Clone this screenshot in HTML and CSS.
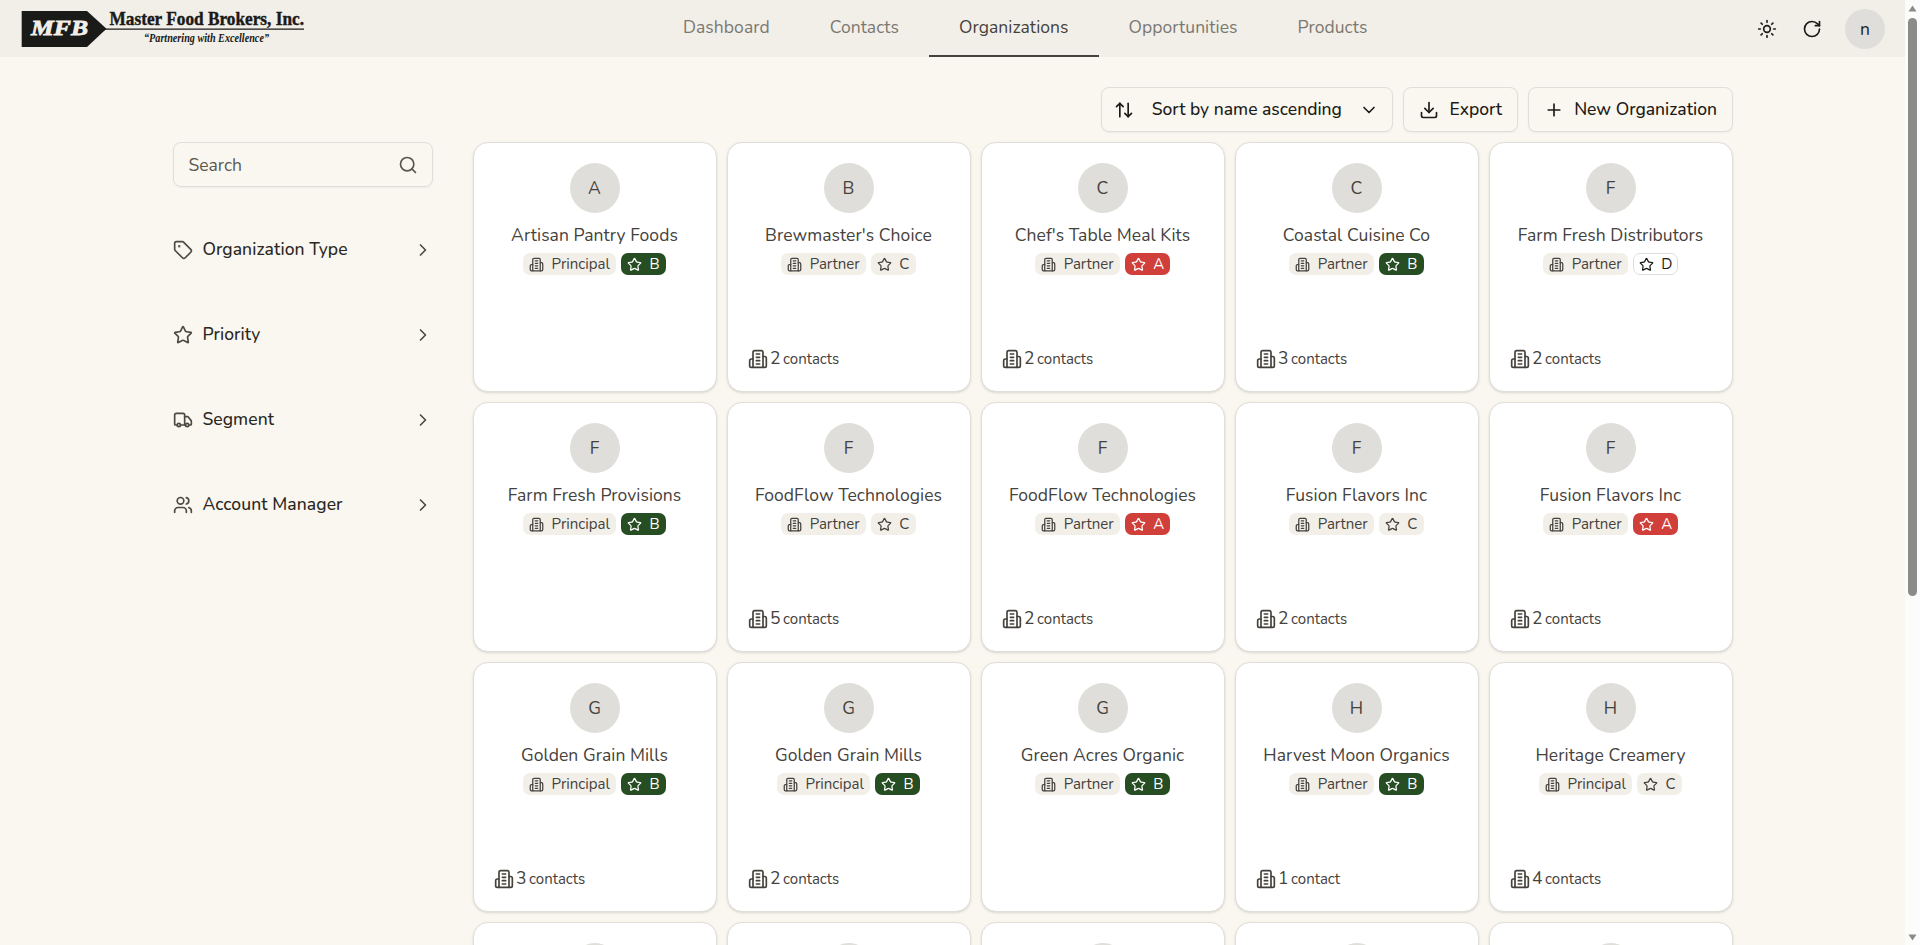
FILE: index.html
```html
<!DOCTYPE html>
<html lang="en">
<head>
<meta charset="utf-8">
<title>Organizations</title>
<link rel="stylesheet" href="styles.css">
</head>
<body>
<svg class="sprite" aria-hidden="true">
  <symbol id="building" viewBox="0 0 24 24"><path d="M6 22V4a2 2 0 0 1 2-2h8a2 2 0 0 1 2 2v18Z"/><path d="M6 12H4a2 2 0 0 0-2 2v6a2 2 0 0 0 2 2h2"/><path d="M18 9h2a2 2 0 0 1 2 2v9a2 2 0 0 1-2 2h-2"/><path d="M10 6h4M10 10h4M10 14h4M10 18h4"/></symbol>
  <symbol id="star" viewBox="0 0 24 24"><path d="M11.525 2.295a.53.53 0 0 1 .95 0l2.31 4.679a2.123 2.123 0 0 0 1.595 1.16l5.166.756a.53.53 0 0 1 .294.904l-3.736 3.638a2.123 2.123 0 0 0-.611 1.878l.882 5.14a.53.53 0 0 1-.771.56l-4.618-2.428a2.122 2.122 0 0 0-1.973 0L6.396 21.01a.53.53 0 0 1-.77-.56l.881-5.139a2.122 2.122 0 0 0-.611-1.879L2.16 9.795a.53.53 0 0 1 .294-.906l5.165-.755a2.122 2.122 0 0 0 1.597-1.16z"/></symbol>
  <symbol id="tag" viewBox="0 0 24 24"><path d="M12.586 2.586A2 2 0 0 0 11.172 2H4a2 2 0 0 0-2 2v7.172a2 2 0 0 0 .586 1.414l8.704 8.704a2.426 2.426 0 0 0 3.42 0l6.58-6.58a2.426 2.426 0 0 0 0-3.42z"/><circle cx="7.5" cy="7.5" r=".5" fill="currentColor"/></symbol>
  <symbol id="truck" viewBox="0 0 24 24"><path d="M14 18V6a2 2 0 0 0-2-2H4a2 2 0 0 0-2 2v11a1 1 0 0 0 1 1h2"/><path d="M15 18H9"/><path d="M19 18h2a1 1 0 0 0 1-1v-3.65a1 1 0 0 0-.22-.624l-3.48-4.35A1 1 0 0 0 17.52 8H14"/><circle cx="17" cy="18" r="2"/><circle cx="7" cy="18" r="2"/></symbol>
  <symbol id="users" viewBox="0 0 24 24"><path d="M16 21v-2a4 4 0 0 0-4-4H6a4 4 0 0 0-4 4v2"/><circle cx="9" cy="7" r="4"/><path d="M22 21v-2a4 4 0 0 0-3-3.87"/><path d="M16 3.13a4 4 0 0 1 0 7.75"/></symbol>
  <symbol id="chev-right" viewBox="0 0 24 24"><path d="m9 18 6-6-6-6"/></symbol>
  <symbol id="chev-down" viewBox="0 0 24 24"><path d="m6 9 6 6 6-6"/></symbol>
  <symbol id="search" viewBox="0 0 24 24"><circle cx="11" cy="11" r="8"/><path d="m21 21-4.3-4.3"/></symbol>
  <symbol id="sort" viewBox="0 0 24 24"><path d="m21 16-4 4-4-4"/><path d="M17 20V4"/><path d="m3 8 4-4 4 4"/><path d="M7 4v16"/></symbol>
  <symbol id="download" viewBox="0 0 24 24"><path d="M12 15V3"/><path d="M21 15v4a2 2 0 0 1-2 2H5a2 2 0 0 1-2-2v-4"/><path d="m7 10 5 5 5-5"/></symbol>
  <symbol id="plus" viewBox="0 0 24 24"><path d="M5 12h14M12 5v14"/></symbol>
  <symbol id="sun" viewBox="0 0 24 24"><circle cx="12" cy="12" r="4"/><path d="M12 2v2M12 20v2M4.93 4.93l1.41 1.41M17.66 17.66l1.41 1.41M2 12h2M20 12h2M6.34 17.66l-1.41 1.41M19.07 4.93l-1.41 1.41"/></symbol>
  <symbol id="refresh" viewBox="0 0 24 24"><path d="M21 12a9 9 0 1 1-9-9c2.52 0 4.93 1 6.74 2.74L21 8"/><path d="M21 3v5h-5"/></symbol>
</svg>

<header class="topbar">
  <svg class="logo" width="290" height="48" viewBox="20 4 290 48" role="img" aria-label="Master Food Brokers, Inc.">
    <path class="logo-ink" d="M21.7 11H87L106.5 28.7 87 47H21.7Z"/>
    <path class="logo-ink" d="M104 28.5h200v1.2H104z"/>
    <text class="logo-mark" x="31" y="34.5" textLength="57" lengthAdjust="spacingAndGlyphs">MFB</text>
    <text class="logo-name" x="109.5" y="25" textLength="194.5" lengthAdjust="spacingAndGlyphs">Master Food Brokers, Inc.</text>
    <text class="logo-tag" x="144" y="42" textLength="125" lengthAdjust="spacingAndGlyphs">“Partnering with Excellence”</text>
  </svg>
  <nav class="nav">
    <a class="tab">Dashboard</a>
    <a class="tab">Contacts</a>
    <a class="tab tab-active">Organizations</a>
    <a class="tab">Opportunities</a>
    <a class="tab">Products</a>
  </nav>
  <div class="tools">
    <span class="tool"><svg class="icon"><use href="#sun"/></svg></span>
    <span class="tool"><svg class="icon"><use href="#refresh"/></svg></span>
    <span class="user">n</span>
  </div>
</header>

<main class="page">
  <div class="actions">
    <button class="btn btn-sort"><svg class="icon"><use href="#sort"/></svg><span>Sort by name ascending</span><svg class="icon"><use href="#chev-down"/></svg></button>
    <button class="btn"><svg class="icon"><use href="#download"/></svg><span>Export</span></button>
    <button class="btn"><svg class="icon"><use href="#plus"/></svg><span>New Organization</span></button>
  </div>
  <div class="columns">
    <aside class="filters">
      <div class="search"><span>Search</span><svg class="icon"><use href="#search"/></svg></div>
      <div class="filter"><svg class="icon"><use href="#tag"/></svg><span>Organization Type</span><svg class="icon end"><use href="#chev-right"/></svg></div>
      <div class="filter"><svg class="icon"><use href="#star"/></svg><span>Priority</span><svg class="icon end"><use href="#chev-right"/></svg></div>
      <div class="filter"><svg class="icon"><use href="#truck"/></svg><span>Segment</span><svg class="icon end"><use href="#chev-right"/></svg></div>
      <div class="filter"><svg class="icon"><use href="#users"/></svg><span>Account Manager</span><svg class="icon end"><use href="#chev-right"/></svg></div>
    </aside>
    <section class="grid" id="grid"></section>
  </div>
</main>

<div class="scrollbar">
  <svg width="9" height="7" viewBox="0 0 9 7"><path d="M4.5 0.5 8.5 6.5h-8z"/></svg>
  <div class="thumb"></div>
  <svg class="down" width="9" height="7" viewBox="0 0 9 7"><path d="M4.5 6.5 8.5 0.5h-8z"/></svg>
</div>
<script src="app.js"></script>
</body>
</html>
```

FILE: styles.css
```css
* { box-sizing: border-box; }
html { height: 100%; overflow: hidden; }
body {
  margin: 0;
  height: 945px;
  overflow: hidden;
  background: #faf7f0;
  color: #45413c;
  font-family: Nunito, Lato, "Noto Sans", sans-serif;
  font-size: 17.5px;
  line-height: 25px;
}
.sprite { position: absolute; width: 0; height: 0; }
.icon {
  width: 20px;
  height: 20px;
  flex: none;
  fill: none;
  stroke: currentColor;
  stroke-width: 2;
  stroke-linecap: round;
  stroke-linejoin: round;
}

.topbar {
  display: grid;
  grid-template-columns: 653px 1fr auto;
  width: 1905px;
  height: 57px;
  background: #f2efe9;
}
.logo { margin: 4px 0 0 20px; }
.logo-ink { fill: #1a1a18; }
.logo-mark, .logo-name, .logo-tag { font-family: "Liberation Serif", serif; font-weight: 700; fill: #1a1a18; }
.logo-mark { font-size: 22px; font-style: italic; fill: #f2efe9; stroke: #f2efe9; stroke-width: .8; }
.logo-name { font-size: 17.8px; stroke: #1a1a18; stroke-width: .4; }
.logo-tag { font-size: 11.6px; font-style: italic; }
.nav { display: flex; height: 57px; }
.tab {
  padding: 15px 30px 0;
  border-bottom: 2px solid transparent;
  color: #7b7871;
  letter-spacing: .055px;
}
.tab-active { color: #45413c; border-color: #45413c; }
.tools { display: flex; align-items: center; padding-right: 20px; }
.tool { width: 45px; display: grid; place-items: center; color: #1d1b17; }
.user {
  width: 40px;
  height: 40px;
  margin-left: 11px;
  border-radius: 50%;
  background: #dfdeda;
  color: #1d1b17;
  text-align: center;
  line-height: 40px;
}

.page { width: 1560px; height: 858px; margin: 30px 0 0 173px; }
.actions { display: flex; justify-content: flex-end; gap: 10px; }
.btn {
  display: flex;
  align-items: center;
  gap: 10px;
  height: 45px;
  padding: 0 15px;
  border: 1px solid #e0deda;
  border-radius: 8px;
  background: #faf7f0;
  box-shadow: 0 1px 2px rgba(0, 0, 0, .05);
  color: #1d1b17;
  font: inherit;
  font-weight: 500;
}
.btn-sort { gap: 17.5px; padding: 0 13px 0 12px; }
.columns { display: flex; gap: 40px; margin-top: 10px; }
.filters { width: 260px; flex: none; }
.search {
  display: flex;
  align-items: center;
  justify-content: space-between;
  height: 45px;
  margin-bottom: 42.5px;
  padding: 1px 14px 0 14.5px;
  border: 1px solid #e0deda;
  border-radius: 8px;
  box-shadow: 0 1px 2px rgba(0, 0, 0, .05);
  color: #5a5751;
}
.filter { display: flex; align-items: center; gap: 9.4px; height: 40px; margin-bottom: 45px; color: #2b2823; font-weight: 500; letter-spacing: .08px; }
.filter .icon { color: #4d4943; }
.end { margin-left: auto; }

.grid { flex: 1; display: grid; grid-template-columns: repeat(5, 1fr); grid-auto-rows: 250px; gap: 10px; }
.card {
  display: flex;
  flex-direction: column;
  align-items: center;
  padding: 20px 21px 20px 20px;
  border: 1px solid #dfded9;
  border-radius: 15px;
  background: #fff;
  box-shadow: 0 1px 3px rgba(0, 0, 0, .1), 0 1px 2px -1px rgba(0, 0, 0, .1);
}
.avatar { width: 50px; height: 50px; border-radius: 50%; background: #dfdeda; text-align: center; line-height: 51px; }
.name { margin-top: 10px; white-space: nowrap; letter-spacing: .06px; }
.badges { display: flex; gap: 5px; margin-top: 5px; }
.badge {
  display: flex;
  align-items: center;
  gap: 7.5px;
  height: 22px;
  padding: 0 5px;
  border: 1px solid transparent;
  border-radius: 7px;
  background: #f2efe9;
  font-size: 15px;
  line-height: 20px;
}
.badge .icon { width: 15px; height: 15px; }
.rank { width: 45px; }
.rank-a { background: #d13f3b; color: #fff; }
.rank-b { background: #274d22; color: #fff; }
.rank-d { background: #fff; border-color: #e0deda; color: #1d1b17; }
.contacts { display: flex; align-items: center; width: 100%; height: 25px; margin-top: auto; }
.count { margin: -1px 2.5px 0 2px; }
.unit { margin-top: 1px; font-size: 15px; }

.scrollbar {
  position: fixed;
  top: 0;
  right: 0;
  width: 15px;
  height: 945px;
  padding: 5px 3px 4px;
  display: flex;
  flex-direction: column;
  background: #fcfcfc;
  fill: #8b8b8b;
}
.thumb { height: 578px; margin-top: 6px; border-radius: 5px; background: #8b8b8b; }
.down { margin-top: auto; }
```

FILE: app.js
```javascript
// name, type, priority, contact count
const organizations = [
  ["Artisan Pantry Foods", "Principal", "B", 0],
  ["Brewmaster's Choice", "Partner", "C", 2],
  ["Chef's Table Meal Kits", "Partner", "A", 2],
  ["Coastal Cuisine Co", "Partner", "B", 3],
  ["Farm Fresh Distributors", "Partner", "D", 2],
  ["Farm Fresh Provisions", "Principal", "B", 0],
  ["FoodFlow Technologies", "Partner", "C", 5],
  ["FoodFlow Technologies", "Partner", "A", 2],
  ["Fusion Flavors Inc", "Partner", "C", 2],
  ["Fusion Flavors Inc", "Partner", "A", 2],
  ["Golden Grain Mills", "Principal", "B", 3],
  ["Golden Grain Mills", "Principal", "B", 2],
  ["Green Acres Organic", "Partner", "B", 0],
  ["Harvest Moon Organics", "Partner", "B", 1],
  ["Heritage Creamery", "Principal", "C", 4],
  [""], [""], [""], [""], [""]
];
const icon = id => `<svg class="icon"><use href="#${id}"/></svg>`;

document.getElementById("grid").innerHTML = organizations.map(([name, type, rank, n]) => `
  <article class="card">
    <div class="avatar">${name.charAt(0)}</div>
    ${name ? `<div class="name">${name}</div>
    <div class="badges">
      <span class="badge">${icon("building")}${type}</span>
      <span class="badge rank rank-${rank.toLowerCase()}">${icon("star")}${rank}</span>
    </div>` : ""}
    ${n ? `<div class="contacts">${icon("building")}<span class="count">${n}</span><span class="unit">${n > 1 ? "contacts" : "contact"}</span></div>` : ""}
  </article>`).join("");
```
